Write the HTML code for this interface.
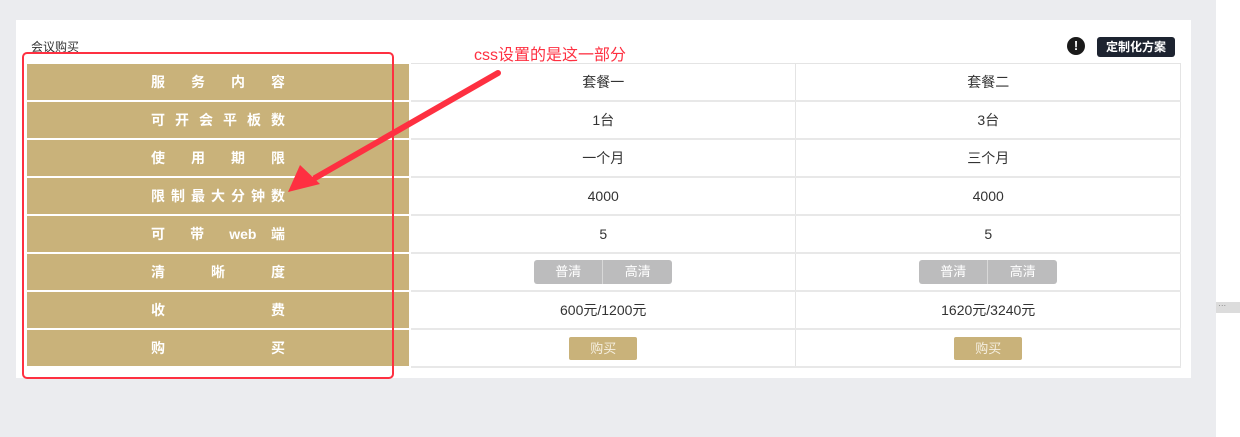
<!DOCTYPE html>
<html><head><meta charset="utf-8"><style>
body{margin:0;width:1240px;height:437px;background:#ebecef;position:relative;overflow:hidden;font-family:"Liberation Sans","Noto Sans CJK SC",sans-serif;}
.side{position:absolute;left:1216px;top:0;width:24px;height:437px;background:#fff;}
.card{position:absolute;left:16px;top:20px;width:1175px;height:358px;background:#fff;}
.title{position:absolute;left:31px;top:38px;font-size:12px;color:#333;}
table{position:absolute;left:26px;top:63px;border-collapse:collapse;width:1155px;}
td{height:36px;border:1px solid #e4e4e4;border-bottom:2px solid #e8e8e8;text-align:center;font-size:14px;color:#333;padding:0;}
td.l{background:#c9b27a;width:382px;color:#fff;font-weight:bold;font-size:14px;border-color:#fff;border-right:2px solid #fff}
.j{display:inline-block;width:134px;text-align:justify;text-align-last:justify;}
.grp{display:inline-flex;border-radius:3px;overflow:hidden;background:#bcbcbd;height:24px;vertical-align:middle}
.grp span{width:68px;line-height:24px;color:#fff;font-size:13px}
.grp span+span{border-left:1px solid #d8d8d8;width:69px}
.buy{display:inline-block;width:68px;height:23px;line-height:23px;background:#c9b27a;color:#f5efe0;font-size:13px;border-radius:2px;vertical-align:middle}
</style></head><body>
<div class="side"></div>
<div style="position:absolute;left:1216px;top:302px;width:24px;height:11px;background:#dcdcdc;font-size:8px;color:#777;line-height:8px">&nbsp;···</div>
<div class="card"></div>
<div class="title">会议购买</div>
<div style="position:absolute;left:1067px;top:37px;width:18px;height:18px;border-radius:50%;background:#1a1a1a;color:#fff;font-weight:bold;font-size:13px;text-align:center;line-height:18px">!</div>
<div style="position:absolute;left:1097px;top:37px;width:78px;height:20px;background:#1d2330;border-radius:3px;color:#fff;font-size:12px;font-weight:bold;text-align:center;line-height:20px">定制化方案</div>
<table>
<tr><td class="l"><span class="j">服务内容</span></td><td>套餐一</td><td>套餐二</td></tr>
<tr><td class="l"><span class="j">可开会平板数</span></td><td>1台</td><td>3台</td></tr>
<tr><td class="l"><span class="j">使用期限</span></td><td>一个月</td><td>三个月</td></tr>
<tr><td class="l"><span class="j">限制最大分钟数</span></td><td>4000</td><td>4000</td></tr>
<tr><td class="l"><span class="j">可 带 web 端</span></td><td>5</td><td>5</td></tr>
<tr><td class="l"><span class="j">清晰度</span></td><td><span class="grp"><span>普清</span><span>高清</span></span></td><td><span class="grp"><span>普清</span><span>高清</span></span></td></tr>
<tr><td class="l"><span class="j">收费</span></td><td>600元/1200元</td><td>1620元/3240元</td></tr>
<tr><td class="l"><span class="j">购买</span></td><td><span class="buy">购买</span></td><td><span class="buy">购买</span></td></tr>
</table>
<div style="position:absolute;left:22px;top:52px;width:368px;height:323px;border:2px solid #fe3041;border-radius:5px"></div>
<div style="position:absolute;left:474px;top:41px;font-size:16px;color:#fe3041">css设置的是这一部分</div>
<svg style="position:absolute;left:0;top:0" width="1240" height="437">
<line x1="498" y1="73" x2="315" y2="178" stroke="#fe3041" stroke-width="6" stroke-linecap="round"/>
<polygon points="288,192 300,165 320,184" fill="#fe3041"/>
</svg>
</body></html>
